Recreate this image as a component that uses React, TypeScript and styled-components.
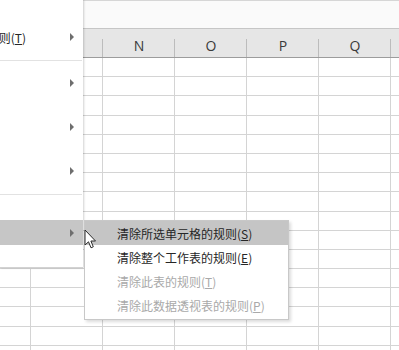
import styled, { createGlobalStyle } from 'styled-components';

const GlobalStyle = createGlobalStyle`
  html, body {
    margin: 0;
    padding: 0;
    background: #ffffff;
    overflow: hidden;
  }
  body {
    font-family: "Noto Sans CJK SC", "Noto Sans", sans-serif;
  }
`;

const columns = ['L', 'M', 'N', 'O', 'P', 'Q', 'R'];
const widths = '31px repeat(6, 72px)';
const ROWS = 16;

const Page = styled.div`
  position: relative;
  width: 399px;
  height: 350px;
  overflow: hidden;
  background: #ffffff;
`;

const Sheet = styled.div`
  display: flex;
  flex-direction: column;
`;

const FormulaBand = styled.div`
  height: 27px;
  background: #fafafa;
  border-top: 1px solid #d6d6d6;
  border-bottom: 1px solid #c6c6c6;
`;

const HeaderRow = styled.div`
  display: grid;
  grid-template-columns: ${widths};
  height: 28px;
  background: #e6e6e6;
  border-bottom: 1px solid #9c9c9c;
`;

const HeaderCell = styled.div`
  position: relative;
  display: flex;
  align-items: flex-end;
  justify-content: center;
  padding-bottom: 3px;
  box-sizing: border-box;
  font-family: "Open Sans", "Noto Sans", sans-serif;
  font-size: 14px;
  line-height: 16px;
  color: #3a3a3a;

  &::after {
    content: '';
    position: absolute;
    right: 0;
    top: 10px;
    bottom: 0;
    width: 1px;
    background: #bcbcbc;
  }
`;

const Body = styled.div`
  display: grid;
  grid-template-columns: ${widths};
  grid-auto-rows: 19.2px;
`;

const Cell = styled.div`
  box-sizing: border-box;
  border-right: 1px solid #d4d4d4;
  border-bottom: 1px solid #d4d4d4;
`;

const LeftMenu = styled.div`
  position: absolute;
  left: 0;
  top: 0;
  width: 83px;
  height: 268px;
  padding-top: 25px;
  box-sizing: border-box;
  background: #ffffff;
  border-bottom: 1px solid #d2d2d2;
  box-shadow: 1px 0 2px rgba(0, 0, 0, 0.18);
  display: flex;
  flex-direction: column;
  overflow: hidden;
`;

const MenuItem = styled.div<{ $h: number; $active?: boolean }>`
  flex: none;
  height: ${({ $h }) => $h}px;
  display: flex;
  align-items: center;
  justify-content: space-between;
  padding-right: 9px;
  background: ${({ $active }) => ($active ? '#c6c6c6' : 'transparent')};
  font-size: 12px;
  color: #262626;
  white-space: nowrap;
`;

const MenuLabel = styled.span`
  margin-left: -66px;
`;

const Arrow = styled.span`
  flex: none;
  width: 0;
  height: 0;
  border-left: 4px solid #6e6e6e;
  border-top: 4px solid transparent;
  border-bottom: 4px solid transparent;
`;

const Separator = styled.div<{ $gap: number }>`
  flex: none;
  height: 1px;
  margin-top: ${({ $gap }) => $gap}px;
  margin-right: 1px;
  background: #e2e2e2;
`;

const SubMenu = styled.div`
  position: absolute;
  left: 84px;
  top: 220px;
  width: 205px;
  height: 100px;
  box-sizing: border-box;
  background: #ffffff;
  border: 1px solid #c8c8c8;
  box-shadow: 2px 2px 3px rgba(0, 0, 0, 0.14);
  display: flex;
  flex-direction: column;
`;

const SubItem = styled.div<{ $active?: boolean; $disabled?: boolean }>`
  height: 24px;
  display: flex;
  align-items: center;
  padding-left: 32px;
  background: ${({ $active }) => ($active ? '#c5c5c5' : 'transparent')};
  color: ${({ $disabled }) => ($disabled ? '#a9a9a9' : '#262626')};
  font-size: 12px;
  white-space: nowrap;
`;

const Key = styled.span`
  text-decoration: underline;
  text-underline-offset: 1px;
`;

const Cursor = styled.svg`
  position: absolute;
  left: 84px;
  top: 229px;
`;

const subItems = [
  { label: '清除所选单元格的规则', key: 'S', active: true },
  { label: '清除整个工作表的规则', key: 'E' },
  { label: '清除此表的规则', key: 'T', disabled: true },
  { label: '清除此数据透视表的规则', key: 'P', disabled: true },
];

export default function App() {
  return (
    <Page>
      <GlobalStyle />
      <Sheet>
        <FormulaBand />
        <HeaderRow>
          {columns.map(c => (
            <HeaderCell key={c}>{c}</HeaderCell>
          ))}
        </HeaderRow>
        <Body>
          {Array.from({ length: ROWS * columns.length }, (_, i) => (
            <Cell key={i} />
          ))}
        </Body>
      </Sheet>

      <LeftMenu>
        <MenuItem $h={24}>
          <MenuLabel>最前/最后规则(<Key>T</Key>)</MenuLabel>
          <Arrow />
        </MenuItem>
        <Separator $gap={11} />
        <MenuItem $h={44}>
          <MenuLabel>数据条(D)</MenuLabel>
          <Arrow />
        </MenuItem>
        <MenuItem $h={44}>
          <MenuLabel>色阶(S)</MenuLabel>
          <Arrow />
        </MenuItem>
        <MenuItem $h={44}>
          <MenuLabel>图标集(I)</MenuLabel>
          <Arrow />
        </MenuItem>
        <Separator $gap={1} />
        <MenuItem $h={25}>
          <MenuLabel>新建规则(N)</MenuLabel>
        </MenuItem>
        <MenuItem $h={25} $active>
          <MenuLabel>清除规则(C)</MenuLabel>
          <Arrow />
        </MenuItem>
        <MenuItem $h={23}>
          <MenuLabel>管理规则(R)</MenuLabel>
        </MenuItem>
      </LeftMenu>

      <SubMenu>
        {subItems.map(item => (
          <SubItem key={item.key} $active={item.active} $disabled={item.disabled}>
            {item.label}(<Key>{item.key}</Key>)
          </SubItem>
        ))}
      </SubMenu>

      <Cursor width="13" height="21" viewBox="0 0 13 21">
        <path
          d="M1 1 L1 16 L4.5 12.8 L7 18.8 L9.3 17.8 L6.9 12 L11.5 12 Z"
          fill="#ffffff"
          stroke="#2a2a2a"
          strokeWidth="1"
          strokeLinejoin="round"
        />
      </Cursor>
    </Page>
  );
}
